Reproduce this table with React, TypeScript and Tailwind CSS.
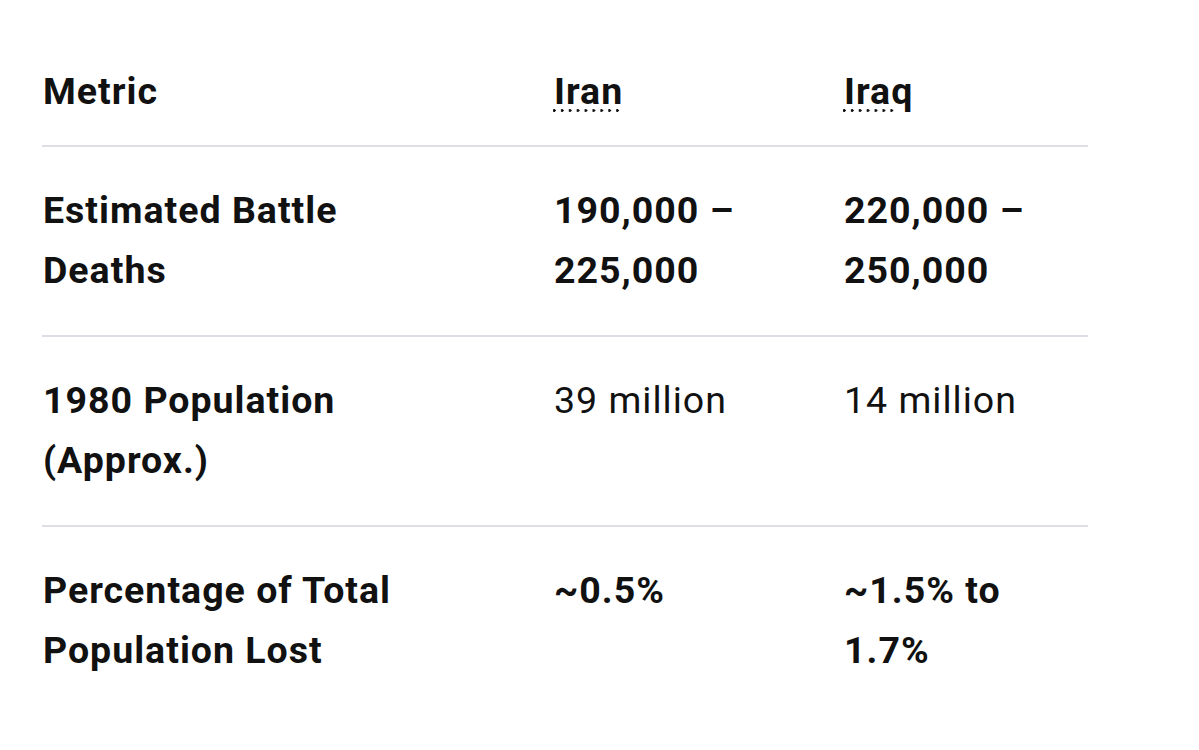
import React from "react";

const Dots = ({ w }: { w: number }) => (
  <span
    aria-hidden
    className="pointer-events-none absolute left-[-1px] top-[47.5px] h-[3px] bg-[radial-gradient(circle_at_1.3px_1.5px,#111_1.2px,transparent_1.6px)] bg-[length:7.9px_3px] bg-repeat-x"
    style={{ width: w }}
  />
);

const Row = ({
  a,
  b,
  c,
  boldVals,
  last,
}: {
  a: string;
  b: React.ReactNode;
  c: React.ReactNode;
  boldVals: boolean;
  last?: boolean;
}) => (
  <div
    className={`-ml-[1px] grid grid-cols-[511px_290px_245px] pl-[1px] pt-[33px] pb-[35px] ${
      last ? "" : "border-b-2 border-[#dedee6]"
    }`}
  >
    <div className="pr-[90px] font-bold">{a}</div>
    <div className={`pr-[20px] ${boldVals ? "font-bold" : "font-normal"}`}>{b}</div>
    <div className={`pr-[10px] ${boldVals ? "font-bold" : "font-normal"}`}>{c}</div>
  </div>
);

export default function App() {
  return (
    <div
      className="min-h-[750px] w-[1199px] bg-white pl-[43px] pt-[61px] text-[37.5px] leading-[60px] tracking-[1px] text-[#111]"
      style={{ fontFamily: "Roboto, 'Noto Sans', sans-serif" }}
    >
      <div className="w-[1045px]">
        <div className="-ml-[1px] grid grid-cols-[511px_290px_245px] pl-[1px] pb-[24px] border-b-2 border-[#dedee6] font-bold">
          <div>Metric</div>
          <div>
            <span className="relative inline-block">
              Iran
              <Dots w={68} />
            </span>
          </div>
          <div>
            <span className="relative inline-block">
              Iraq
              <Dots w={52} />
            </span>
          </div>
        </div>
        <Row a="Estimated Battle Deaths" b="190,000 – 225,000" c="220,000 – 250,000" boldVals />
        <Row a="1980 Population (Approx.)" b="39 million" c="14 million" boldVals={false} />
        <Row a="Percentage of Total Population Lost" b="~0.5%" c="~1.5% to 1.7%" boldVals last />
      </div>
    </div>
  );
}
